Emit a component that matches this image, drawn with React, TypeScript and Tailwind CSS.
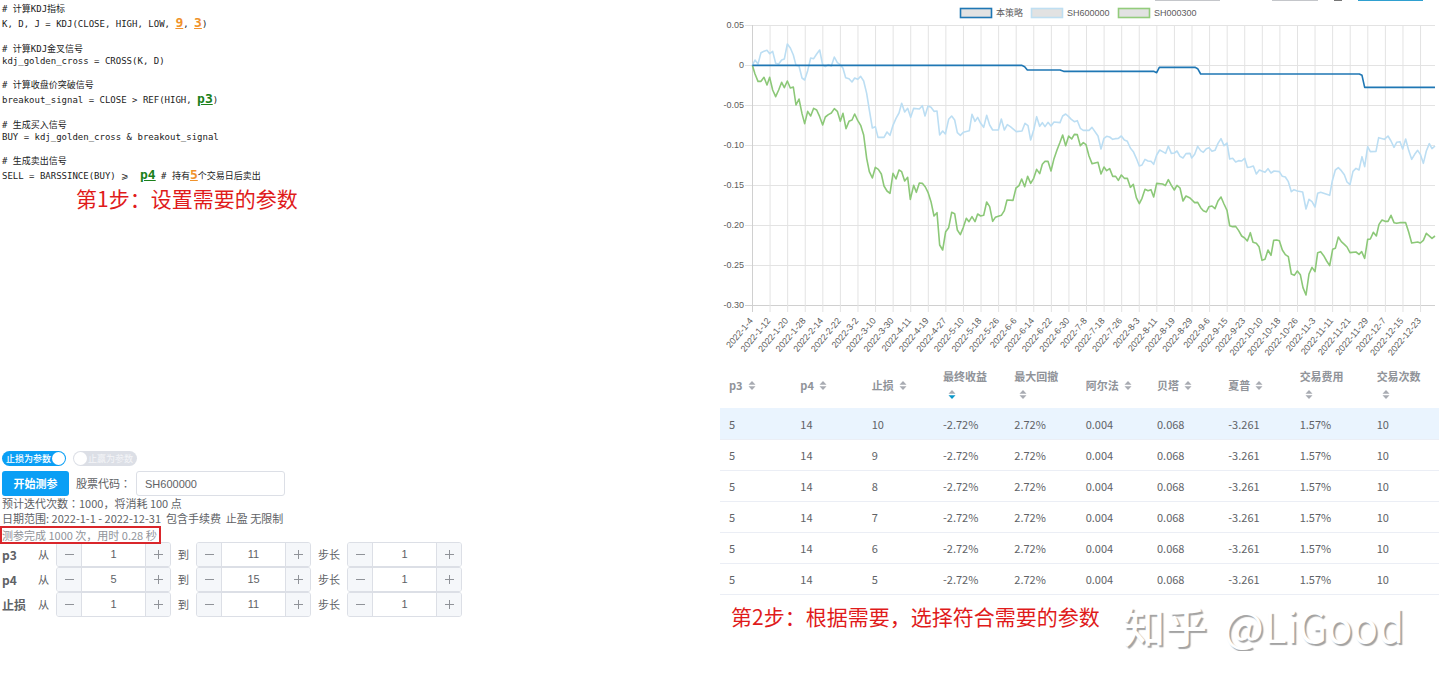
import { useState } from "react"
import type { ReactNode } from "react"

type Parametro = {
  nome: string
  de: number
  ate: number
  passo: number
}

const parametros: Parametro[] = [
  { nome: "p3", de: 1, ate: 11, passo: 1 },
  { nome: "p4", de: 5, ate: 15, passo: 1 },
  { nome: "止损", de: 1, ate: 11, passo: 1 },
]

const colunas = ["p3", "p4", "止损", "最终收益", "最大回撤", "阿尔法", "贝塔", "夏普", "交易费用", "交易次数"]

const linhas = [10, 9, 8, 7, 6, 5].map((stop) => [
  "5", "14", String(stop), "-2.72%", "2.72%", "0.004", "0.068", "-3.261", "1.57%", "10",
])

const datas = [
  "1-4", "1-12", "1-20", "1-28", "2-14", "2-22", "3-2", "3-10", "3-30", "4-11", "4-19", "4-27", "5-10",
  "5-18", "5-26", "6-6", "6-14", "6-22", "6-30", "7-8", "7-18", "7-26", "8-3", "8-11", "8-19", "8-29",
  "9-6", "9-15", "9-23", "10-10", "10-18", "10-26", "11-3", "11-11", "11-21", "11-29", "12-7", "12-15", "12-23",
]

const niveis = ["0.05", "0", "-0.05", "-0.10", "-0.15", "-0.20", "-0.25", "-0.30"]

// each stretch of a series has its own origin, in thirds of a chart unit
function trecho(dx: number, dy: number, pontos: string) {
  return pontos
    .split(" ")
    .map((p) => {
      const [x, y] = p.split(",").map(Number)
      return `${x + dx},${y + dy}`
    })
    .join(" ")
}

const estrategia =
  "97,196 905,196 914,200 922,210 1020,210 1031,214 1301,214 1310,218 1318,202 1425,202 1433,206 1442,222 1918,222 1926,226 1934,262 2145,262"

const sh600000 = [
  trecho(0, 0, "97,196 105,180 114,192 123,158 132,154 141,151 149,161 158,154 167,190 176,192 185,180 193,177 202,132 211,144 220,165 228,196 237,198 246,234 254,240 263,212 272,174 281,176 290,162 299,150 308,195 316,200 325,194 334,198 343,171 352,188 361,194 369,205 377,233 387,236 396,246 404,234 413,238 422,229 431,243 440,280 448,330 457,384 466,380 474,412 492,412 501,396 510,406 519,376 528,355 537,339 545,310 554,336 563,325 572,352 581,325 598,327 607,317 615,348 624,318 633,322 642,334 651,333 659,405 668,393 676,402 686,358 695,348 704,360 712,398"),
  trecho(660, 0, "61,406 70,397 88,392 96,343 105,364 113,352 122,370 131,382 140,346 149,375 158,390 175,390 184,357 193,390 202,374 211,380 229,395 246,393 255,370 264,377 272,420 281,390 290,350 299,379 307,368 315,380 324,367 333,378 342,366 360,368 368,348 377,342 386,350 394,358 403,365 412,362 421,385 430,391 447,391 456,382 474,408 483,447 492,415 500,409 509,411 518,418 526,416 535,415 544,408 553,420 562,424 571,444 580,455 589,475 598,498 606,495 615,478 624,483 633,484 641,493 650,465 659,450 668,455 677,460 685,438 694,460 703,459 711,453 720,469 729,474 738,461"),
  trecho(1410, 0, "0,460 5,474 14,463 23,439 32,452 40,457 49,446 57,443 66,454 75,451 84,430 93,416 102,437 111,429 119,477 128,475 137,486 146,482 155,483 164,475 172,502 181,501 190,498 199,522 208,510 225,517 234,506 243,519 252,513 268,515 277,529 286,531 295,545 304,575 312,569 322,573 338,576 348,627 357,598 366,605 375,621 383,580 392,577 401,580 419,586 427,542 436,510 445,503 454,512 463,524 471,546 480,554 489,514 498,505 507,510 516,470 524,500 533,440 541,455 558,454 566,413 583,418 594,408 603,423 612,442 620,427 630,425 638,447 647,417 656,451 665,478 674,463 683,451 691,463 700,490 709,453 718,431 726,446 735,438"),
].join(" ")

const sh000300 = [
  trecho(0, 0, "97,196 105,222 114,244 123,244 132,232 141,255 149,232 158,270 167,290 176,270 185,247 193,263 202,243 211,264 220,261 228,315 237,297 246,341 254,371 263,334 272,348 281,325 290,330 299,350 308,375 316,351 325,344 334,339 343,326 352,334 361,364 369,340 378,386 387,364 396,360 404,342 413,361 422,376 431,405 440,475 448,515 457,534 466,502 475,508 484,522 492,558 501,573 510,580 519,520 528,537 537,510 545,515 554,543 563,532 571,598 581,556 589,577 598,549 607,550 616,561 624,577 633,605 642,648 651,638 659,735"),
  trecho(660, 300, "8,450 17,395 26,383 35,337 44,341 52,390 61,404 70,382 79,355 87,365 96,350 105,365 113,342 122,348 131,346 140,306 149,320 158,364 166,352 184,346 193,332 201,300 219,301 228,264 237,257 245,237 254,260 263,229 272,250 281,235 290,208 299,221 307,193 315,184 324,184 333,213 342,176 351,150 360,127 368,105 377,137 386,108 395,117 403,103 412,104 421,137 430,128 438,134 447,168 456,191 474,187 483,222 492,201 500,212 509,206 518,229 527,229 535,241 544,225 553,235 562,235 571,262 580,253 589,293 598,311 606,295 615,268 624,272 633,269 641,291 650,250 668,252 676,257 685,239 694,256 703,270 711,256 720,264 729,303 738,288"),
  trecho(1410, 360, "0,234 14,248 23,247 32,263 40,272 49,276 57,260 66,258 75,266 84,243 93,231 102,252 111,271 119,317 128,320 137,319 146,332 155,348 164,354 172,363 181,338 189,367 199,370 207,380 216,421 225,418 234,390 243,406 251,361 260,360 268,362 277,390 286,404 295,410 304,462 313,466 322,453 331,464 339,503 348,525 357,462 366,442 375,455 383,398 392,395 401,407 410,423 419,437 428,388 436,385 445,351 454,365 463,373 471,381 480,398 498,396 507,403 515,395 524,415 533,358 541,357 550,337 559,348 567,313 576,300 585,304 594,304 603,286 612,308 620,310 629,308 647,308 656,336 665,369 683,366 691,369 700,361 709,340 726,355 735,348"),
].join(" ")

const legenda = [
  { x: 240, texto: "本策略", cor: "#1f77b4" },
  { x: 311, texto: "SH600000", cor: "#bfdff2" },
  { x: 398, texto: "SH000300", cor: "#93cc7c" },
]

function Numero({ children }: { children: ReactNode }) {
  return <span className="text-[13px] font-bold text-[#f0922b] underline">{children}</span>
}

function Variavel({ children }: { children: ReactNode }) {
  return <span className="text-[13px] font-bold text-[#1a801a] underline">{children}</span>
}

function Codigo() {
  return (
    <pre className="pt-[3px] pl-[2px] font-['DejaVu_Sans_Mono','Noto_Sans_CJK_SC',monospace] text-[9px] leading-[12px] text-[#222]">
      <div className="h-[12px]"># 计算KDJ指标</div>
      <div className="h-[16px] leading-[16px]">K, D, J = KDJ(CLOSE, HIGH, LOW, <Numero>9</Numero>, <Numero>3</Numero>)</div>
      <div className="mt-3 h-[12px]"># 计算KDJ金叉信号</div>
      <div className="h-[12px]">kdj_golden_cross = CROSS(K, D)</div>
      <div className="mt-3 h-[12px]"># 计算收盘价突破信号</div>
      <div className="h-[16px] leading-[16px]">breakout_signal = CLOSE &gt; REF(HIGH, <Variavel>p3</Variavel>)</div>
      <div className="mt-3 h-[12px]"># 生成买入信号</div>
      <div className="h-[12px]">BUY = kdj_golden_cross &amp; breakout_signal</div>
      <div className="mt-3 h-[12px]"># 生成卖出信号</div>
      <div className="h-[16px] leading-[16px]">SELL = BARSSINCE(BUY) ⩾  <Variavel>p4</Variavel> # 持有<Numero>5</Numero>个交易日后卖出</div>
    </pre>
  )
}

function Contador({ rotulo, inicial }: { rotulo: string; inicial: number }) {
  const [valor, setValor] = useState(inicial)

  return (
    <div className="flex h-[25px] w-[115px] overflow-hidden rounded-[3px] border border-[#dcdfe6] text-[#909399]">
      <button
        aria-label={`${rotulo} 减少`}
        onClick={() => setValor(valor - 1)}
        className="flex w-[25px] items-center justify-center border-r border-[#dcdfe6] bg-[#f5f7fa]"
      >
        <svg viewBox="0 0 9 9" className="size-[9px]" stroke="currentColor"><path d="M0 4.5H9" /></svg>
      </button>
      <input
        aria-label={rotulo}
        value={valor}
        onChange={(e) => setValor(Number(e.target.value) || 0)}
        className="w-0 min-w-0 flex-1 bg-white text-center font-['Liberation_Sans',sans-serif] text-[11px] text-[#606266] outline-none"
      />
      <button
        aria-label={`${rotulo} 增加`}
        onClick={() => setValor(valor + 1)}
        className="flex w-[25px] items-center justify-center border-l border-[#dcdfe6] bg-[#f5f7fa]"
      >
        <svg viewBox="0 0 9 9" className="size-[9px]" stroke="currentColor"><path d="M0 4.5H9M4.5 0V9" /></svg>
      </button>
    </div>
  )
}

function Painel() {
  const [stopLoss, setStopLoss] = useState(true)
  const [stopGain, setStopGain] = useState(false)
  const [codigo, setCodigo] = useState("SH600000")

  return (
    <div className="font-['Noto_Sans_CJK_JP',sans-serif] text-[11px] text-[#606266]">
      <div className="flex gap-[7px] pl-[2px] text-[9px] leading-[15px] text-white">
        <button
          role="switch"
          aria-checked={stopLoss}
          onClick={() => setStopLoss(!stopLoss)}
          className="flex h-[15px] w-[64px] items-center justify-between rounded-full bg-[#0a9ff5] pr-px pl-[4px] font-medium"
        >
          止损为参数
          <span className="size-[13px] rounded-full bg-white" />
        </button>
        <button
          role="switch"
          aria-checked={stopGain}
          onClick={() => setStopGain(!stopGain)}
          className="flex h-[15px] w-[64px] items-center justify-between rounded-full bg-[#dcdfe6] pr-[4px] pl-px text-[#f4f5f8]"
        >
          <span className="size-[13px] rounded-full bg-white" />
          止赢为参数
        </button>
      </div>

      <div className="mt-[5px] flex items-center pl-[2px]">
        <button className="h-[25px] w-[67px] rounded-[3px] bg-[#0a9ff5] font-bold text-white">开始测参</button>
        <label htmlFor="codigo" className="ml-[7px] w-[60px]">股票代码：</label>
        <input
          id="codigo"
          value={codigo}
          onChange={(e) => setCodigo(e.target.value)}
          className="h-[25px] w-[149px] rounded-[3px] border border-[#dcdfe6] pl-[8px] font-['Liberation_Sans',sans-serif] outline-none"
        />
      </div>

      <p className="pl-[2px] leading-[15px]">预计迭代次数：1000，将消耗 100 点</p>
      <p className="pl-[2px] leading-[15px] whitespace-pre">日期范围: 2022-1-1 - 2022-12-31  包含手续费  止盈 无限制</p>
      <p className="relative -mb-[2px] w-[161px] border-2 border-[#d9262b] leading-[14px] whitespace-nowrap text-[#909399]">
        测参完成 1000 次，用时 0.28 秒
      </p>

      {parametros.map((p) => (
        <div key={p.nome} className="flex items-center gap-[7px] pl-[2px]">
          <span className="w-[29px] text-[12px] leading-[16px] font-bold whitespace-nowrap">{p.nome}</span>
          <span>从</span>
          <Contador rotulo={`${p.nome} 从`} inicial={p.de} />
          <span>到</span>
          <Contador rotulo={`${p.nome} 到`} inicial={p.ate} />
          <span>步长</span>
          <Contador rotulo={`${p.nome} 步长`} inicial={p.passo} />
        </div>
      ))}
    </div>
  )
}

function Grafico() {
  return (
    <svg
      viewBox="0 0 720 362"
      className="block w-full font-['Liberation_Sans','Noto_Sans_CJK_SC',sans-serif] text-[9px]"
      fill="#5c5c5c"
    >
      {/* lower edge of the toolbar above the chart */}
      <path d="M435 0H500M552 0H598" stroke="#c4c6ca" strokeWidth="2" />
      <path d="M614 0H622" stroke="#777" strokeWidth="2" />
      <path d="M638 0H703" stroke="#2fa0d0" strokeWidth="2" />

      {legenda.map((l) => (
        <g key={l.texto}>
          <rect x={l.x + 0.5} y="8.5" width="31" height="9" fill="#e2e2e2" stroke={l.cor} strokeWidth="1.6" />
          <text x={l.x + 36} y="16">{l.texto}</text>
        </g>
      ))}

      {niveis.map((n, i) => (
        <g key={n}>
          <path d={`M25 ${25.5 + i * 40}H715`} stroke={i === 7 ? "#d0d0d0" : "#e3e3e3"} />
          <text x="24" y={28 + i * 40} textAnchor="end">{n}</text>
        </g>
      ))}

      {datas.map((d, i) => {
        const x = 32.5 + i * 17.58
        return (
          <g key={d}>
            <path d={`M${x} 25V312`} stroke={i === 0 ? "#d0d0d0" : "#e3e3e3"} />
            <text transform={`translate(${x + 1} 321) rotate(-50)`} textAnchor="end">2022-{d}</text>
          </g>
        )
      })}

      <g transform="scale(0.333333)" fill="none" strokeWidth="4.8" strokeLinejoin="round">
        <polyline points={sh000300} stroke="#8cc878" />
        <polyline points={sh600000} stroke="#bcdef3" />
        <polyline points={estrategia} stroke="#1f77b4" />
      </g>
    </svg>
  )
}

function Resultados() {
  return (
    <table className="w-full table-fixed border-collapse text-left text-[11px] text-[#606266]">
      <thead>
        <tr className="h-[46px] text-[#909399]">
          {colunas.map((c) => (
            <th key={c} className={c === "交易费用" ? "w-[77px] pl-[9px]" : "pl-[9px]"}>
              <button className="flex w-[53px] flex-wrap items-center text-left leading-[18px] font-bold">
                {c}
                <span className="flex h-[18px] w-[18px] items-center justify-center">
                  <svg viewBox="0 0 8 9" className="h-[9px] w-[8px]" fill="#a8abb2">
                    <path d="M4 0L7.5 3.7H.5Z" />
                    <path d="M4 9L.5 5.3H7.5Z" fill={c === "最终收益" ? "#0a97c9" : "#a8abb2"} />
                  </svg>
                </span>
              </button>
            </th>
          ))}
        </tr>
      </thead>
      <tbody>
        {linhas.map((linha, i) => (
          <tr key={i} className={i === 0 ? "h-[31px] border-b border-[#ebeef5] bg-[#eaf4fe]" : "h-[31px] border-b border-[#ebeef5]"}>
            {linha.map((valor, j) => (
              <td key={j} className="pt-px pl-[9px]">{valor}</td>
            ))}
          </tr>
        ))}
      </tbody>
    </table>
  )
}

export default function App() {
  return (
    <main className="flex bg-white font-['Noto_Sans_CJK_SC',sans-serif]">

      {/* Código e parâmetros */}
      <section className="w-1/2">
        <Codigo />
        <h2 className="mt-px mb-[239px] pl-[76px] text-[21px] leading-[28px] text-[#e01b1b]">第1步：设置需要的参数</h2>
        <Painel />
      </section>

      {/* Gráfico e resultados */}
      <section className="w-1/2">
        <Grafico />
        <div className="pr-px">
          <Resultados />
        </div>
        <div className="flex items-start justify-between pr-[36px] pl-[11px]">
          <h2 className="pt-[7px] text-[21px] leading-[28px] whitespace-nowrap text-[#e01b1b]">第2步：根据需要，选择符合需要的参数</h2>
          <p className="flex gap-[17px] pt-[4px] text-[42px] leading-[52px] whitespace-nowrap text-white [text-shadow:2px_2px_1px_#a3a3a3]">
            <span className="font-medium">知乎</span>
            <span>@LiGood</span>
          </p>
        </div>
      </section>

    </main>
  )
}
